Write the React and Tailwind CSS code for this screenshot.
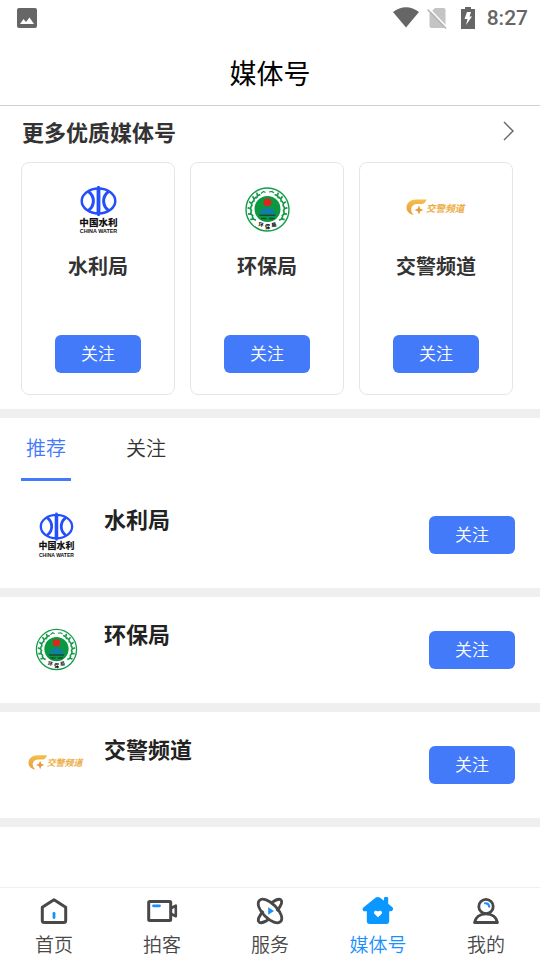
import { useState } from "react";

function WaterLogo() {
  return (
    <svg viewBox="0 0 60 60" className="w-full h-full" role="img" aria-label="中国水利">
      <g fill="none" stroke="#2350fb">
        <ellipse cx="30.500" cy="21" rx="16.800" ry="12.500" strokeWidth="2.500" />
        <path d="M20.500 11.500c6.500 5 6.500 14 0 19M40.500 11.500c-6.500 5-6.500 14 0 19" strokeWidth="3" />
        <path d="M30.500 7.500v27" strokeWidth="3.800" />
        <path d="M30.500 6v30" strokeWidth="2.400" />
      </g>
      <text x="30.500" y="45.500" textAnchor="middle" fontSize="9.600" fontWeight="900" fill="#111">中国水利</text>
      <text x="30.500" y="53.200" textAnchor="middle" fontFamily="Liberation Sans" fontSize="5.400" fontWeight="700" fill="#111">CHINA WATER</text>
    </svg>
  );
}

function EnvironmentLogo() {
  const leaves = [-122, -104, -86, -68, -50, -34, 34, 50, 68, 86, 104, 122];
  return (
    <svg viewBox="0 0 60 60" className="w-full h-full" role="img" aria-label="环保局">
      <circle cx="30.500" cy="29.500" r="21.500" fill="#fff" stroke="#149b48" strokeWidth="1.400" />
      <circle cx="30.500" cy="29" r="13" fill="#0b9840" />
      {leaves.map((a) => (
        <path
          key={a}
          d={a < 0 ? "M27.500 14l2.500-1.500 3 .5M30 12.500l1-3" : "M33.500 14l-2.500-1.500-3 .5M31 12.500l-1-3"}
          transform={`rotate(${a} 30.500 29.500)`}
          fill="none"
          stroke="#149b48"
          strokeWidth="1.700"
        />
      ))}
      <path d="M24 13.500l2.500-2 2 1M32 12l3-.5 2 1.500" fill="none" stroke="#149b48" strokeWidth="1.200" />
      <circle cx="30.500" cy="22.300" r="3.900" fill="#e3241b" />
      <path d="M22.500 33.500l3.500-5 1.500 2 3-4.500 3 4.500 1.500-2 3.500 5z" fill="#1379bd" />
      <path d="M22.500 35.300h16M24 38.500h5.500M32 38.500h5.500" stroke="#174c3a" strokeWidth="1.500" />
      <text x="24" y="46.500" textAnchor="middle" fontSize="5" fontWeight="900" fill="#111" transform="rotate(10 24 45)">环</text>
      <text x="30.500" y="48" textAnchor="middle" fontSize="5" fontWeight="900" fill="#111">保</text>
      <text x="37" y="46.500" textAnchor="middle" fontSize="5" fontWeight="900" fill="#111" transform="rotate(-10 37 45)">局</text>
    </svg>
  );
}

function TrafficLogo() {
  return (
    <svg viewBox="0 0 60 60" className="w-full h-full" role="img" aria-label="交警频道">
      <defs>
        <linearGradient id="gold" x1="0" y1="0" x2="0" y2="1">
          <stop offset="0" stopColor="#f5c04a" />
          <stop offset="1" stopColor="#e89a3c" />
        </linearGradient>
      </defs>
      <path d="M20.500 19.500h-10C4.500 19.500.500 23 .500 27.500c0 3.800 2.800 6.500 7.500 7.500-2.300-2-3.300-4-2.800-6.500C5.800 25.500 8 24 11 24h4.500c2.500 0 4-1.700 5-4.500z" fill="url(#gold)" />
      <path d="M13 25.500l1.300 3.200 3.200 1.300-3.200 1.300L13 34.500l-1.300-3.200L8.500 30l3.200-1.300z" fill="#e89a3c" />
      <text x="20" y="31.500" fontSize="9.600" fontWeight="700" fontStyle="italic" fill="#edab43">交警频道</text>
    </svg>
  );
}

const accounts = [
  { name: "水利局", Logo: WaterLogo },
  { name: "环保局", Logo: EnvironmentLogo },
  { name: "交警频道", Logo: TrafficLogo },
];

function FollowButton() {
  return (
    <button className="w-[86px] h-[38px] pb-1 shrink-0 rounded-md bg-[#437afa] text-[17px] leading-none font-[350] text-white">
      关注
    </button>
  );
}

function HomeIcon() {
  return (
    <svg viewBox="0 0 32 32" className="w-8 h-8" fill="none" strokeLinejoin="round" strokeLinecap="round">
      <path d="M4.300 12.200 16 4.800l11.700 7.400v13.300a2 2 0 0 1-2 2H6.300a2 2 0 0 1-2-2z" stroke="#484848" strokeWidth="3" />
      <path d="M16 18.300v4.200" stroke="#1890ff" strokeWidth="2.800" />
    </svg>
  );
}

function VideoIcon() {
  return (
    <svg viewBox="0 0 32 32" className="w-8 h-8" fill="none" strokeLinejoin="round" strokeLinecap="round">
      <rect x="2.700" y="6.500" width="22" height="19" rx="1" stroke="#484848" strokeWidth="3" />
      <path d="M25.500 13l4.300-2.300v10.600L25.500 19" stroke="#484848" strokeWidth="2.600" />
      <path d="M7.500 10.800h6" stroke="#1890ff" strokeWidth="2.800" />
    </svg>
  );
}

function ServiceIcon() {
  return (
    <svg viewBox="0 0 32 32" className="w-8 h-8" fill="none" stroke="#484848" strokeWidth="2.800">
      <ellipse cx="16" cy="16" rx="15" ry="7.200" transform="rotate(45 16 16)" />
      <path d="M17 8.200c4-3.200 8.300-4.800 10-3.200s.2 5.800-4.400 11M15 23.800c-4 3.200-8.300 4.800-10 3.200s-.2-5.800 4.400-11" />
      <path d="M14.200 12.200l5.800 3.800-5.800 3.800z" fill="#1890ff" stroke="none" />
    </svg>
  );
}

function MediaIcon() {
  return (
    <svg viewBox="0 0 32 32" className="w-8 h-8">
      <path
        d="M13.500 2.800a3.800 3.800 0 0 1 4.600 0l3.900 2.900V3.200a1.200 1.200 0 0 1 1.200-1.200h1.800a1.200 1.200 0 0 1 1.200 1.200v5.600l4.200 3.400c1.300 1.200.6 4-1.400 4H27.200V26a3 3 0 0 1-3 3H7.800a3 3 0 0 1-3-3v-9.800H2.600c-2 0-2.700-2.500-1.200-3.800z"
        fill="#0a97ff"
      />
      <path d="M16 22.300l-3.400-3.300c-2-2.200 1.200-4.800 3.400-2.400 2.200-2.400 5.400.2 3.400 2.400z" fill="#fff" />
    </svg>
  );
}

function UserIcon() {
  return (
    <svg viewBox="0 0 32 32" className="w-8 h-8" fill="none" strokeLinejoin="round" strokeLinecap="round">
      <circle cx="16" cy="11.500" r="7.200" stroke="#484848" strokeWidth="2.800" />
      <path d="M4.500 27.500C5.500 22 10 18.800 16 18.800s10.500 3.200 11.500 8.700z" stroke="#484848" strokeWidth="2.800" />
      <path d="M15 8.300c2.300-.2 4 1.200 4.300 3.500" stroke="#1890ff" strokeWidth="2" />
    </svg>
  );
}

const navItems = [
  { label: "首页", Icon: HomeIcon },
  { label: "拍客", Icon: VideoIcon },
  { label: "服务", Icon: ServiceIcon },
  { label: "媒体号", Icon: MediaIcon, active: true },
  { label: "我的", Icon: UserIcon },
];

function StatusBar() {
  return (
    <div className="h-9 pl-4 pr-3 flex items-center justify-between text-[#666]">
      <svg viewBox="0 0 22 22" className="w-[22px] h-[22px]">
        <rect x="1" y="1" width="20" height="20" rx="2" fill="#666" />
        <path d="M4 17l3.500-5 2.500 3 3.500-4.500L18 17z" fill="#fff" />
      </svg>
      <div className="flex items-center">
        <svg viewBox="0 0 26 22" className="w-[26px] h-[22px]">
          <path d="M0 5C8-1.300 18-1.300 26 5L13 20.500z" fill="#666" />
        </svg>
        <svg viewBox="0 0 20 22" className="w-5 h-[22px] ml-2">
          <path d="M8 1h8.500a2 2 0 0 1 2 2v16a2 2 0 0 1-2 2h-12a2 2 0 0 1-2-2V6.500z" fill="#c4c4c4" />
          <path d="M2 1.500l19 20" stroke="#fff" strokeWidth="1.500" />
          <path d="M.5 2.500l18.500 19" stroke="#b5b5b5" strokeWidth="1.500" />
        </svg>
        <svg viewBox="0 0 14 22" className="w-[14px] h-[22px] ml-[14px]">
          <path d="M4 0h6v2h4v20H0V2h4z" fill="#666" />
          <path d="M6 5h4L8.500 9.500H11L5 18l1.500-6H3.500z" fill="#fff" />
        </svg>
        <span className="ml-3 font-[Roboto] text-[21px] leading-6 font-medium">8:27</span>
      </div>
    </div>
  );
}

export default function App() {
  const [tab, setTab] = useState("推荐");

  return (
    <div className="min-h-screen flex flex-col bg-white text-[#333] font-['Noto_Sans_CJK_SC',sans-serif]">
      <StatusBar />
      <header className="h-[70px] flex items-center justify-center border-b border-[#d0d0d0] pt-1">
        <h1 className="text-[27px] leading-10 text-black">媒体号</h1>
      </header>

      <main className="grow">
        <section className="pt-[5px] pb-[14px] border-b-[9px] border-[#efefef]">
          <div className="pl-[22px] pr-5 flex items-center justify-between">
            <h2 className="text-[22px] leading-10 font-bold">更多优质媒体号</h2>
            <a href="#more" aria-label="更多优质媒体号">
              <svg viewBox="0 0 24 24" className="w-6 h-6" fill="none" stroke="#666" strokeWidth="1.400">
                <path d="M8 3l9 9-9 9" />
              </svg>
            </a>
          </div>
          <div className="mt-[11px] pl-[21px] pr-[27px] flex gap-[15px]">
            {accounts.map(({ name, Logo }) => (
              <article key={name} className="flex-1 pt-[17px] pb-[21px] flex flex-col items-center rounded-lg border border-[#e6e6e6]">
                <div className="w-[60px] h-[60px]">
                  <Logo />
                </div>
                <h3 className="mt-[11px] mb-[54px] text-[20px] leading-[30px] font-bold">{name}</h3>
                <FollowButton />
              </article>
            ))}
          </div>
        </section>

        <div role="tablist" className="h-16 pl-[21px] pb-px flex gap-[50px]">
          {["推荐", "关注"].map((label) => (
            <button
              key={label}
              role="tab"
              aria-selected={tab === label}
              onClick={() => setTab(label)}
              className={
                tab === label
                  ? "px-[5px] text-[20px] font-[350] text-[#437afa] border-b-[3px] border-[#437afa]"
                  : "px-[5px] text-[20px] font-[350] border-b-[3px] border-transparent"
              }
            >
              {label}
            </button>
          ))}
        </div>

        <ul>
          {accounts.map(({ name, Logo }) => (
            <li key={name} className="h-[115px] pl-7 pr-[25px] flex items-center border-b-[9px] border-[#efefef]">
              <div className="w-14 h-14 shrink-0">
                <Logo />
              </div>
              <h3 className="grow self-start mt-5 ml-5 text-[22px] leading-8 font-bold text-[#222]">{name}</h3>
              <FollowButton />
            </li>
          ))}
        </ul>
      </main>

      <nav className="sticky bottom-0 h-[73px] pt-[7px] flex bg-white border-t border-[#efefef]">
        {navItems.map(({ label, Icon, active }) => (
          <a
            key={label}
            href="#nav"
            className={
              active
                ? "flex-1 flex flex-col items-center text-[19px] leading-8 font-[350] text-[#1890ff]"
                : "flex-1 flex flex-col items-center text-[19px] leading-8 font-[350] text-[#484848]"
            }
          >
            <Icon />
            <span className="mt-px">{label}</span>
          </a>
        ))}
      </nav>
    </div>
  );
}
